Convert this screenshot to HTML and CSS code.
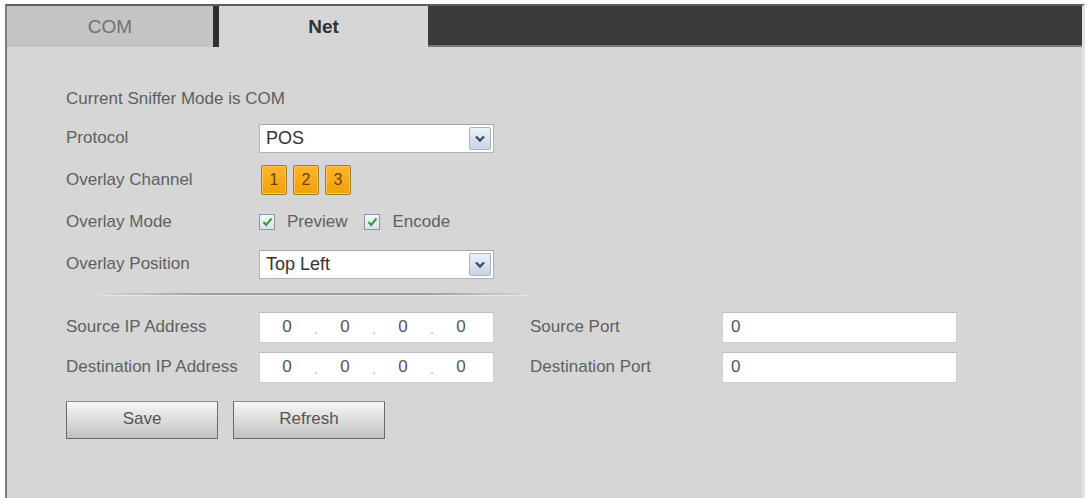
FILE: index.html
```html
<!DOCTYPE html>
<html>
<head>
<meta charset="utf-8">
<link rel="stylesheet" href="styles.css">
</head>
<body>
<div class="frame">
  <div class="tabs">
    <div class="tab tab-com">COM</div>
    <div class="tab-sep"></div>
    <div class="tab tab-net">Net</div>
    <div class="tab-fill"></div>
  </div>
  <div class="content">
    <div class="mode-line">Current Sniffer Mode is COM</div>
    <div class="row">
      <div class="label">Protocol</div>
      <div class="select"><span class="select-text">POS</span><span class="arrow"><svg width="12" height="9" viewBox="0 0 12 9"><polyline points="2,2.5 6,6.5 10,2.5" fill="none" stroke="#3a4b6e" stroke-width="2.4"/></svg></span></div>
    </div>
    <div class="row">
      <div class="label">Overlay Channel</div>
      <div class="chans">
        <div class="chan">1</div>
        <div class="chan">2</div>
        <div class="chan">3</div>
      </div>
    </div>
    <div class="row">
      <div class="label">Overlay Mode</div>
      <div class="checks">
        <span class="cb"><svg width="11" height="10" viewBox="0 0 11 10"><polyline points="1.5,5 4.2,8 9.5,1.5" fill="none" stroke="#2e9e3a" stroke-width="2"/></svg></span>
        <span class="cb-text">Preview</span>
        <span class="cb cb2"><svg width="11" height="10" viewBox="0 0 11 10"><polyline points="1.5,5 4.2,8 9.5,1.5" fill="none" stroke="#2e9e3a" stroke-width="2"/></svg></span>
        <span class="cb-text">Encode</span>
      </div>
    </div>
    <div class="row">
      <div class="label">Overlay Position</div>
      <div class="select"><span class="select-text">Top Left</span><span class="arrow"><svg width="12" height="9" viewBox="0 0 12 9"><polyline points="2,2.5 6,6.5 10,2.5" fill="none" stroke="#3a4b6e" stroke-width="2.4"/></svg></span></div>
    </div>
    <div class="sep"></div>
    <div class="row row-ip">
      <div class="label">Source IP Address</div>
      <div class="ip"><span class="oct">0</span><span class="dot">.</span><span class="oct">0</span><span class="dot">.</span><span class="oct">0</span><span class="dot">.</span><span class="oct">0</span></div>
      <div class="label label-r">Source Port</div>
      <div class="port">0</div>
    </div>
    <div class="row row-ip">
      <div class="label">Destination IP Address</div>
      <div class="ip"><span class="oct">0</span><span class="dot">.</span><span class="oct">0</span><span class="dot">.</span><span class="oct">0</span><span class="dot">.</span><span class="oct">0</span></div>
      <div class="label label-r">Destination Port</div>
      <div class="port">0</div>
    </div>
    <div class="buttons">
      <div class="btn">Save</div>
      <div class="btn">Refresh</div>
    </div>
  </div>
</div>
</body>
</html>
```

FILE: styles.css
```css
html, body {
  margin: 0;
  padding: 0;
  background: #ffffff;
}
body {
  width: 1090px;
  height: 498px;
  overflow: hidden;
  font-family: "Liberation Sans", Arial, sans-serif;
  padding: 4px 0 0 5px;
  box-sizing: border-box;
}
.frame {
  width: 1080px;
  height: 494px;
  box-sizing: border-box;
  border-top: 2px solid #5e5e5e;
  border-left: 2px solid #7c7c7c;
  border-right: 3px solid #e2e2e2;
  background: #d6d6d6;
}
.tabs {
  display: flex;
  height: 41px;
}
.tab {
  display: flex;
  align-items: center;
  justify-content: center;
  font-size: 19px;
}
.tab-com {
  width: 206px;
  background: #c4c4c4;
  color: #727272;
}
.tab-sep {
  width: 6px;
  background: #303030;
}
.tab-net {
  width: 209px;
  background: #d6d6d6;
  color: #333333;
  font-weight: bold;
}
.tab-fill {
  flex: 1;
  background: #3a3a3a;
  border-bottom: 2px solid #7a7a7a;
}
.content {
  padding: 42px 0 0 59px;
  color: #606060;
  font-size: 17px;
}
.mode-line {
  height: 20px;
  line-height: 20px;
  margin-bottom: 8px;
}
.row {
  display: flex;
  align-items: center;
  height: 42px;
}
.label {
  width: 193px;
  flex: none;
  white-space: nowrap;
}
.select {
  width: 235px;
  height: 29px;
  box-sizing: border-box;
  border: 1px solid #b4b4b4;
  border-top-color: #a6a6a6;
  background: #ffffff;
  display: flex;
  align-items: center;
  justify-content: space-between;
  padding: 0 2px 0 6px;
}
.select-text {
  font-size: 18px;
  color: #333333;
}
.arrow {
  width: 22px;
  height: 23px;
  box-sizing: border-box;
  border: 1px solid #a3b3c9;
  border-radius: 2px;
  background: linear-gradient(#eef2f8, #c8d4e4);
  display: flex;
  align-items: center;
  justify-content: center;
}
.chans {
  display: flex;
  gap: 6px;
  padding-left: 2px;
}
.chan {
  width: 26px;
  height: 30px;
  box-sizing: border-box;
  border: 1px solid #a67a24;
  border-radius: 2px;
  background: linear-gradient(#fbb630, #f2a200);
  box-shadow: inset 0 0 0 1px #ffc95a;
  color: #6a4300;
  font-size: 16px;
  display: flex;
  align-items: center;
  justify-content: center;
}
.checks {
  display: flex;
  align-items: center;
}
.cb {
  width: 16px;
  height: 16px;
  box-sizing: border-box;
  border: 1px solid #8197b2;
  background: linear-gradient(#f6f8fa, #dde3ea);
  display: flex;
  align-items: center;
  justify-content: center;
}
.cb2 {
  margin-left: 17px;
}
.cb-text {
  margin-left: 12px;
}
.sep {
  margin: 8px 0 12px 34px;
  width: 430px;
  height: 2px;
  background: linear-gradient(to right, rgba(150,150,150,0), #9c9c9c 25%, #9c9c9c 75%, rgba(150,150,150,0));
  box-shadow: 0 1px 0 #e6e6e6;
}
.row-ip {
  height: 40px;
}
.ip {
  width: 235px;
  height: 31px;
  box-sizing: border-box;
  border: 1px solid #cdcdcd;
  border-top-color: #bdbdbd;
  background: #ffffff;
  display: flex;
  align-items: center;
  padding-left: 5px;
  color: #555555;
}
.oct {
  width: 44px;
  text-align: center;
}
.dot {
  width: 14px;
  text-align: center;
  color: #b0b0b0;
  font-size: 14px;
  padding-top: 4px;
}
.label-r {
  margin-left: 36px;
  width: 192px;
}
.port {
  width: 235px;
  height: 31px;
  box-sizing: border-box;
  border: 1px solid #cdcdcd;
  border-top-color: #bdbdbd;
  background: #ffffff;
  display: flex;
  align-items: center;
  padding-left: 8px;
  color: #555555;
}
.buttons {
  display: flex;
  gap: 15px;
  margin-top: 14px;
}
.btn {
  width: 152px;
  height: 38px;
  box-sizing: border-box;
  border: 1px solid #6a6a6a;
  border-top-color: #8a8a8a;
  background: linear-gradient(#f7f7f7, #dadada 55%, #bfbfbf);
  display: flex;
  align-items: center;
  justify-content: center;
  color: #555555;
  padding-bottom: 2px;
}
```
